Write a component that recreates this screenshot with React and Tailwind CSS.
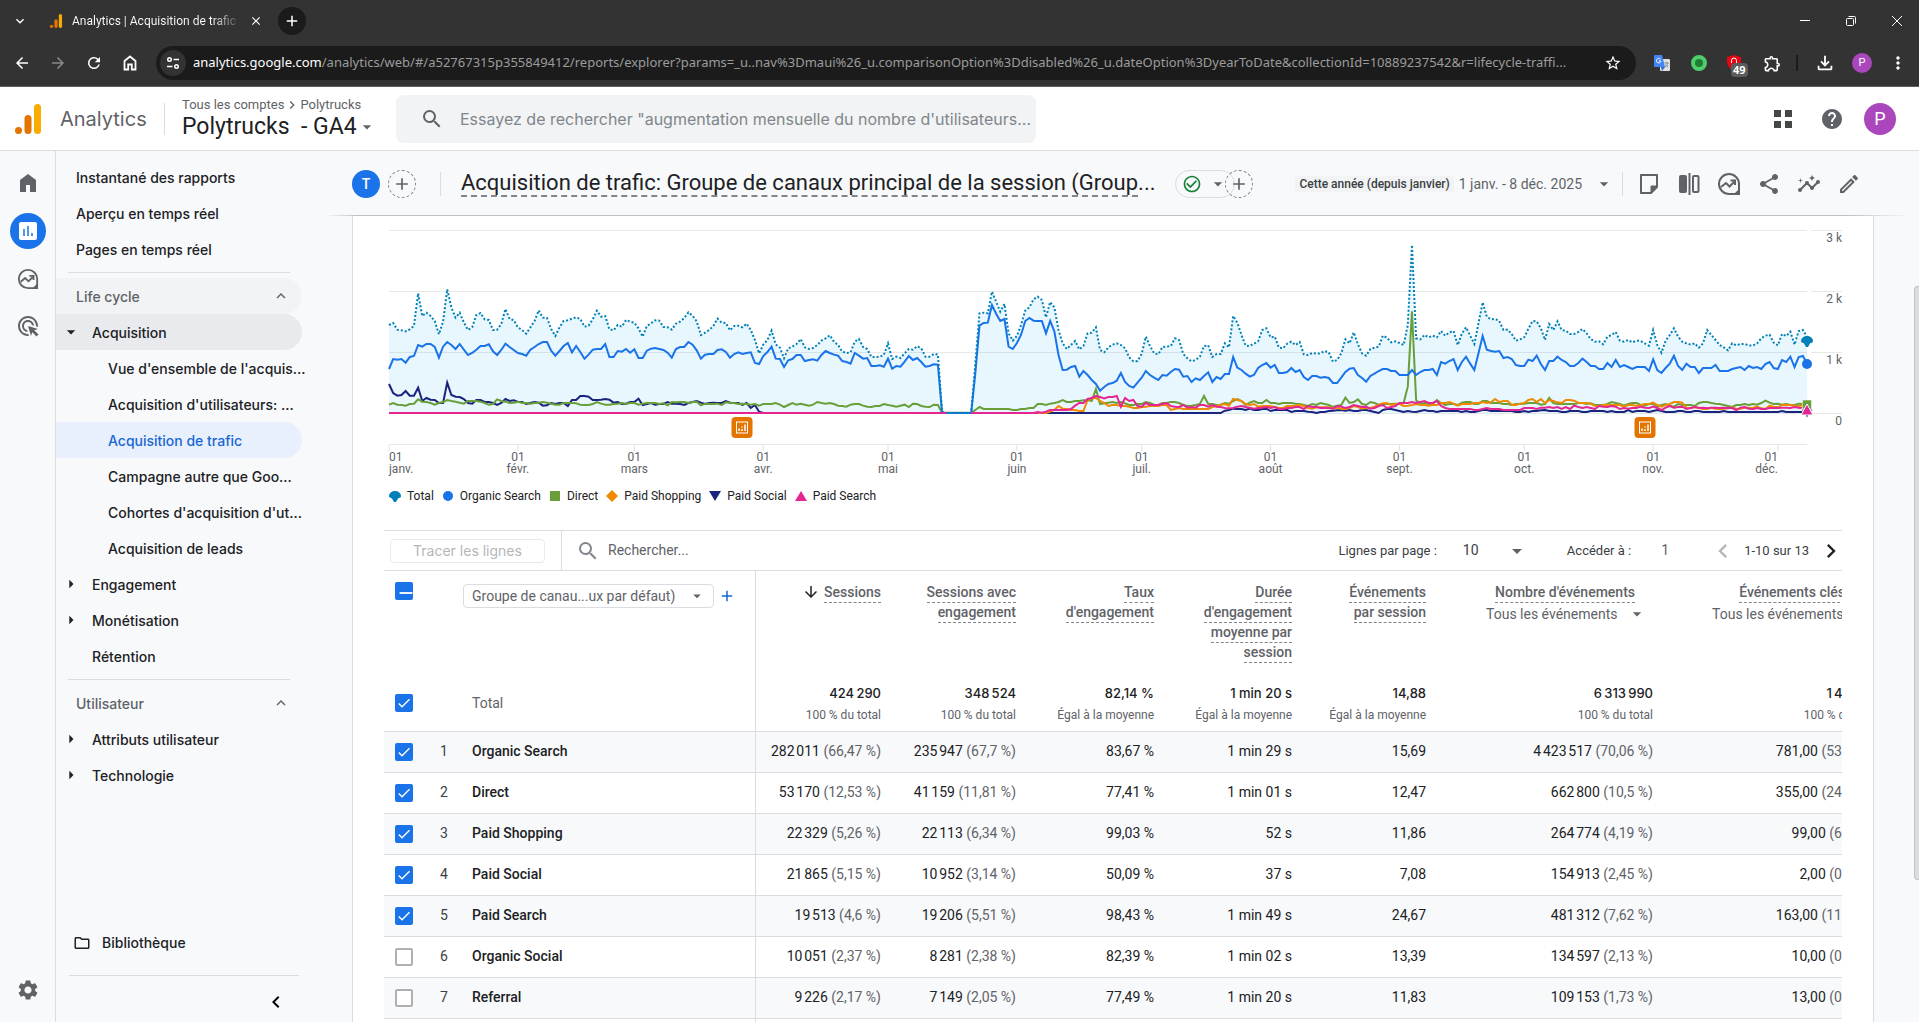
import React, { useState } from "react";
import {
  MdAdd,
  MdAdsClick,
  MdArrowBack,
  MdArrowDownward,
  MdArrowDropDown,
  MdArrowForward,
  MdArrowRight,
  MdCheck,
  MdCheckCircleOutline,
  MdChevronLeft,
  MdChevronRight,
  MdClose,
  MdExpandLess,
  MdExpandMore,
  MdHelp,
  MdInsights,
  MdMoreVert,
  MdOutlineEdit,
  MdOutlineExtension,
  MdOutlineFileDownload,
  MdOutlineFolder,
  MdRefresh,
  MdRemove,
  MdSearch,
  MdSettings,
  MdShare,
  MdStarBorder,
} from "react-icons/md";

const NB = "\u202f";
const flat = (y, n) => Array(n).fill(y);

// One point per day from 1 Jan to 8 Dec, y counted down from the top of the plot
// (31 = 3 k, 214 = 2 k, 397 = 1 k, 580 = 0).
const DAYS = 341;

const total = [
  315, 309, 329, 331, 334, 328, 318, 220, 288, 278, 288, 303, 343, 305, 208, 262, 293, 278, 307, 330,
  322, 285, 279, 298, 300, 330, 329, 312, 267, 297, 300, 322, 330, 341, 322, 303, 271, 293, 294, 327,
  348, 322, 303, 301, 296, 292, 297, 320, 317, 298, 272, 290, 288, 328, 331, 315, 320, 300, 305, 308,
  325, 350, 318, 310, 301, 302, 321, 322, 329, 311, 305, 294, 277, 287, 304, 345, 338, 330, 318, 296,
  308, 309, 331, 318, 317, 322, 311, 330, 360, 400, 374, 360, 332, 373, 383, 415, 385, 380, 372, 357,
  382, 387, 384, 375, 362, 355, 346, 365, 375, 395, 399, 397, 365, 357, 381, 387, 411, 411, 410, 405,
  370, 417, 410, 414, 400, 387, 389, 379, 385, 410, 410, 402, 403, 575, ...flat(579, 7), 430, 280, 278,
  280, 215, 245, 275, 252, 340, 362, 348, 315, 272, 262, 238, 230, 240, 292, 246, 262, 330, 370, 387,
  375, 363, 388, 378, 340, 338, 322, 390, 397, 382, 374, 370, 375, 385, 412, 424, 423, 402, 350, 378,
  400, 403, 381, 380, 378, 355, 360, 402, 415, 424, 420, 410, 378, 376, 411, 402, 402, 370, 382, 288,
  308, 345, 377, 378, 371, 364, 330, 325, 352, 350, 383, 385, 371, 365, 375, 366, 403, 405, 399, 401,
  400, 393, 397, 425, 420, 400, 358, 370, 337, 373, 400, 407, 387, 383, 380, 347, 353, 367, 364, 369,
  375, 315, 75, 355, 358, 345, 352, 347, 352, 333, 347, 337, 333, 375, 341, 322, 347, 372, 310, 247,
  290, 298, 297, 303, 330, 329, 342, 362, 358, 352, 326, 303, 304, 325, 360, 312, 330, 304, 330, 332,
  342, 342, 336, 327, 340, 357, 365, 364, 373, 350, 345, 336, 362, 365, 360, 367, 362, 363, 370, 377,
  330, 375, 398, 362, 345, 325, 350, 365, 370, 374, 370, 383, 370, 330, 345, 360, 375, 382, 391, 370,
  376, 372, 372, 376, 377, 370, 355, 347, 344, 368, 376, 342, 348, 335, 374, 333, 330, 350,
];

const organic = [
  447, 417, 419, 417, 428, 411, 408, 375, 380, 372, 372, 381, 413, 380, 366, 375, 387, 372, 389, 405,
  399, 389, 378, 378, 373, 394, 405, 390, 371, 381, 390, 399, 402, 407, 389, 381, 372, 366, 366, 392,
  407, 393, 378, 369, 397, 378, 396, 416, 404, 389, 387, 387, 372, 411, 411, 393, 395, 387, 398, 388,
  414, 414, 392, 386, 384, 387, 390, 398, 413, 387, 381, 381, 366, 374, 391, 416, 404, 402, 402, 390,
  388, 396, 413, 402, 397, 402, 399, 397, 429, 432, 408, 396, 380, 416, 417, 441, 421, 417, 405, 405,
  423, 420, 418, 422, 405, 393, 399, 404, 407, 423, 426, 431, 399, 407, 416, 414, 438, 438, 436, 440,
  416, 446, 438, 440, 425, 408, 420, 414, 426, 440, 438, 433, 434, 578, ...flat(579, 7), 460, 317, 309,
  308, 255, 281, 303, 297, 380, 387, 369, 344, 303, 294, 302, 303, 303, 340, 303, 334, 405, 450, 449,
  441, 438, 470, 453, 465, 480, 492, 512, 501, 492, 489, 482, 459, 486, 498, 503, 488, 473, 453, 465,
  473, 480, 465, 467, 456, 447, 449, 470, 468, 486, 475, 480, 468, 457, 486, 471, 477, 462, 462, 411,
  443, 450, 461, 470, 465, 444, 435, 429, 443, 435, 459, 459, 456, 444, 456, 450, 471, 480, 468, 468,
  473, 471, 474, 489, 489, 473, 456, 446, 444, 465, 474, 485, 468, 461, 453, 447, 447, 453, 453, 465,
  465, 465, 450, 465, 456, 450, 450, 447, 465, 426, 431, 423, 417, 450, 426, 410, 431, 450, 400, 348,
  389, 393, 395, 393, 414, 411, 417, 435, 438, 438, 419, 423, 407, 432, 450, 423, 423, 410, 420, 426,
  438, 438, 429, 416, 426, 438, 438, 447, 447, 429, 441, 420, 441, 435, 441, 447, 441, 441, 441, 453,
  418, 450, 459, 444, 431, 407, 438, 450, 431, 441, 441, 459, 444, 444, 444, 435, 453, 453, 453, 447,
  444, 441, 450, 438, 444, 441, 447, 432, 426, 444, 447, 420, 426, 410, 441, 411, 408, 430,
];

const direct = [
  554, 549, 554, 555, 557, 552, 551, 538, 545, 546, 549, 554, 549, 546, 540, 543, 545, 548, 551, 543,
  543, 543, 545, 549, 554, 552, 538, 543, 545, 549, 548, 545, 549, 549, 551, 549, 548, 546, 548, 551,
  554, 554, 549, 549, 549, 550, 554, 555, 555, 552, 546, 551, 554, 554, 552, 551, 549, 551, 549, 549,
  554, 551, 549, 549, 549, 552, 550, 556, 546, 547, 546, 546, 549, 546, 545, 556, 551, 552, 552, 551,
  555, 547, 548, 549, 552, 551, 552, 554, 552, 557, 552, 552, 552, 549, 554, 561, 555, 549, 554, 551,
  554, 557, 554, 546, 549, 551, 549, 552, 557, 558, 560, 554, 552, 552, 557, 560, 561, 558, 558, 552,
  555, 557, 560, 557, 554, 561, 551, 552, 558, 560, 561, 554, 555, 578, ...flat(578, 7), 570, 561, 567,
  ...flat(567, 6), 570, 570, 567, 567, 564, 564, 552, 552, 555, 551, 549, 546, 540, 546,
  546, 543, 543, 541, 541, 543, 507, 552, 550, 548, 546, 549, 546, 550, 555, 555, 552, 552, 546, 549,
  554, 555, 549, 549, 546, 546, 549, 555, 558, 557, 555, 552, 528, 552, 552, 555, 554, 549, 551, 543,
  537, 543, 555, 548, 543, 549, 549, 540, 549, 549, 552, 549, 549, 549, 551, 552, 555, 558, 552, 555,
  549, 552, 555, 561, 557, 555, 533, 549, 546, 538, 552, 555, 546, 549, 554, 552, 552, 552, 551, 551,
  549, 500, 274, 540, 552, 549, 552, 551, 540, 549, 555, 552, 552, 555, 548, 546, 546, 552, 552, 543,
  543, 549, 549, 549, 552, 552, 555, 552, 552, 551, 549, 549, 549, 554, 552, 534, 549, 552, 552, 552,
  552, 552, 549, 549, 552, 550, 555, 555, 555, 552, 546, 549, 552, 557, 552, 549, 549, 555, 557, 552,
  552, 560, 555, 552, 557, 560, 552, 555, 555, 555, 558, 549, 546, 546, 549, 551, 552, 555, 558, 561,
  555, 555, 552, 555, 552, 554, 549, 542, 548, 552, 551, 554, 552, 555, 555, 551, 552, 552,
];

const shopping = [
  ...flat(579, 159), 575, 570, 558, 566, 567, 570, 570, 573, 573, 540, 534, 534, 543, 549, 558, 555, 555,
  558, 558, 560, 564, 564, 561, 560, 558, 558, 558, 555, 555, 570, 567, 564, 567, 567, 567, 567, 567,
  567, 567, 561, 558, 554, 552, 557, 537, 540, 543, 552, 555, 552, 560, 558, 558, 558, 561, 564, 564,
  558, 558, 557, 554, 558, 564, 566, 562, 562, 562, 562, 566, 563, 567, 567, 564, 558, 561, 566, 564,
  564, 560, 555, 550, 549, 555, 552, 552, 558, 557, 555, 552, 555, 555, 557, 555, 555, 549, 549, 546,
  551, 557, 552, 552, 552, 549, 549, 546, 549, 547, 537, 546, 543, 543, 554, 555, 551, 549, 540, 537,
  546, 537, 549, 540, 543, 547, 549, 540, 540, 542, 548, 549, 549, 551, 558, 558, 555, 555, 555, 555,
  555, 560, 555, 555, 558, 555, 552, 552, 548, 555, 560, 555, 552, 546, 546, 548, 563, 564, 561, 563,
  567, 567, 563, 566, 567, 566, 565, 562, 567, 566, 563, 563, 564, 560, 565, 567, 557, 560, 562, 555,
  555, 555, 557, 558, 556, 557,
];

const social = [
  492, 519, 527, 525, 513, 527, 527, 503, 543, 534, 539, 540, 549, 549, 488, 525, 530, 531, 537, 549,
  551, 540, 540, 546, 546, 549, 555, 549, 537, 543, 541, 546, 546, 552, 549, 546, 548, 557, 556, 549,
  552, 549, 549, 558, 540, 540, 528, 528, 530, 540, 540, 539, 537, 539, 548, 546, 552, 551, 546, 546,
  536, 555, 552, 549, 554, 552, 552, 546, 551, 551, 552, 555, 549, 546, 543, 548, 552, 549, 548, 549,
  549, 543, 548, 549, 549, 555, 549, 564, 555, 575, ...flat(579, 111), 572, 570, 566, 567, 567, 570,
  566, 570, 570, 567, 566, 573, 570, 570, 570, 570, 576, 573, 573, 573, 575, 576, 579, 576, 576, 573,
  572, 571, 570, 572, 570, 573, 573, 570, 570, 573, 576, 579, 570, 567, 567, 570, 573, 576, 573, 575,
  576, 573, 570, 573, 573, 576, ...flat(573, 5), 576, 573, 576, 576, 573, 570, 570, 573, 573, 573, 573,
  573, 573, 576, 576, 573, 576, 573, 573, 571, 570, 573, 573, 573, 576, 576, 573, 573, 573, 576, 576,
  573, 573, 573, 573, 576, 573, 576, 576, 576, 570, 576, 573, 573, 573, 576, 573, 570, 573, 576, 576,
  576, 573, 573, 576, 576, 573, 573, 576, ...flat(576, 4), 573, ...flat(576, 13), 573, ...flat(576, 6), 573,
];

const search = [
  ...flat(579, 156), 576, 578, 575, 570, 570, 570, 570, 570, 567, 557, 549, 549, 537, 534, 528, 531, 535,
  531, 531, 528, 560, 534, 543, 540, 558, 560, 549, 555, 555, 555, 552, 549, 558, 560, 561, 555, 563,
  561, 563, 555, 555, 560, 555, 560, 561, 564, 565, 564, 560, 558, 561, 563, 566, 564, 563, 561, 564,
  561, 567, 567, 564, 564, 561, 561, 567, 558, 561, 561, 564, 563, 564, 566, 558, 560, 564, 561, 555,
  558, 561, 560, 566, 564, 558, 555, 564, 561, 558, 549, 549, 549, 546, 549, 546, 543, 549, 549, 543,
  558, 564, ...flat(567, 6), 570, 570, 567, 564, 567, 567, 567, ...flat(570, 5), 564, 564, 564, 567, 563,
  563, 561, 564, 561, 567, 561, 567, 557, 561, 564, 561, 564, 567, 558, 560, 561, 558, 560, 567, 564,
  566, 564, 564, 560, 563, 564, 560, 564, 570, 563, 558, 563, 561, 560, 567, 564, 561, 564, 563, 565,
  563, 563, 564, 563, 564, 564, 570, 563, 561, 566, 567, 564, 567, 567, 564, 564, 564, 563, 563, 564,
  561, 563, 565, 567,
];

const toPoints = (values) => values.map((y, x) => `${Math.min(x, DAYS)},${y}`).join(" ");

const lines = [
  { values: social, color: "#1a237e" },
  { values: direct, color: "#689f38" },
  { values: shopping, color: "#ef8a00" },
  { values: search, color: "#e52592" },
  { values: organic, color: "#1a73e8" },
];

const months = [
  ["janv.", 0],
  ["févr.", 31],
  ["mars", 59],
  ["avr.", 90],
  ["mai", 120],
  ["juin", 151],
  ["juil.", 181],
  ["août", 212],
  ["sept.", 243],
  ["oct.", 273],
  ["nov.", 304],
  ["déc.", 334],
];

const legend = [
  ["Total", <path d="M0 6a6 5 0 0 1 12 0c0 2-2 1.500-3 2.500L7 12H5L3 8.500C2 7.500 0 8 0 6z" fill="#0080b7" />],
  ["Organic Search", <circle cx="6" cy="6" r="5" fill="#1a73e8" />],
  ["Direct", <rect x="1" y="1" width="10" height="10" fill="#689f38" />],
  ["Paid Shopping", <path d="M6 0l6 6-6 6-6-6z" fill="#ef8a00" />],
  ["Paid Social", <path d="M0 1h12L6 11z" fill="#1a237e" />],
  ["Paid Search", <path d="M0 11h12L6 1z" fill="#e52592" />],
];

const rows = [
  ["Organic Search", true, ["282 011", "66,47 %"], ["235 947", "67,7 %"], ["83,67 %"], ["1 min 29 s"], ["15,69"], ["4 423 517", "70,06 %"], ["781,00", "53,79 %"]],
  ["Direct", true, ["53 170", "12,53 %"], ["41 159", "11,81 %"], ["77,41 %"], ["1 min 01 s"], ["12,47"], ["662 800", "10,5 %"], ["355,00", "24,45 %"]],
  ["Paid Shopping", true, ["22 329", "5,26 %"], ["22 113", "6,34 %"], ["99,03 %"], ["52 s"], ["11,86"], ["264 774", "4,19 %"], ["99,00", "6,82 %"]],
  ["Paid Social", true, ["21 865", "5,15 %"], ["10 952", "3,14 %"], ["50,09 %"], ["37 s"], ["7,08"], ["154 913", "2,45 %"], ["2,00", "0,14 %"]],
  ["Paid Search", true, ["19 513", "4,6 %"], ["19 206", "5,51 %"], ["98,43 %"], ["1 min 49 s"], ["24,67"], ["481 312", "7,62 %"], ["163,00", "11,23 %"]],
  ["Organic Social", false, ["10 051", "2,37 %"], ["8 281", "2,38 %"], ["82,39 %"], ["1 min 02 s"], ["13,39"], ["134 597", "2,13 %"], ["10,00", "0,69 %"]],
  ["Referral", false, ["9 226", "2,17 %"], ["7 149", "2,05 %"], ["77,49 %"], ["1 min 20 s"], ["11,83"], ["109 153", "1,73 %"], ["13,00", "0,90 %"]],
];

const totals = [
  ["424 290", "100 % du total"],
  ["348 524", "100 % du total"],
  ["82,14 %", "Égal à la moyenne"],
  ["1 min 20 s", "Égal à la moyenne"],
  ["14,88", "Égal à la moyenne"],
  ["6 313 990", "100 % du total"],
  ["1 452,00", "100 % du total"],
];

// Digits are grouped with a narrow space, units keep the normal one.
const group = (text) => text.replace(/(\d) (?=\d{3})/g, `$1${NB}`);

const AnalyticsLogo = ({ className }) => (
  <svg viewBox="0 0 26 30" className={className} aria-hidden="true">
    <rect x="19" y="0" width="7" height="30" rx="3.500" fill="#f9ab00" />
    <rect x="9.500" y="11" width="7" height="19" rx="3.500" fill="#e37400" />
    <circle cx="3.500" cy="26.500" r="3.500" fill="#e37400" />
  </svg>
);

const ExploreIcon = ({ className }) => (
  <svg viewBox="0 0 24 24" className={className} fill="none" stroke="currentColor" strokeWidth="2" aria-hidden="true">
    <path d="M12 22a10 10 0 1 1 10-10v10H12z" />
    <path d="M4 15l5-4 3.500 3.500L18 9" />
    <path d="M13.500 8.500H18V13" />
    <path d="M22 17v5h-5z" fill="currentColor" stroke="none" />
  </svg>
);

const AnnotationIcon = () => (
  <svg viewBox="0 0 21 21" className="size-[21px]" fill="none" stroke="#fff" aria-hidden="true">
    <rect x="5" y="5" width="11" height="11" />
    <path d="M7.500 14v-2.500M10.500 14v-2M10.500 10.500V9.500M13.500 14V7.500" strokeWidth="1.500" />
  </svg>
);

const iconButton = "flex shrink-0 items-center justify-center";

const BrowserChrome = () => (
  <div className="shrink-0 border-b border-[#5f5f5f] bg-[#333333] text-white">
    <div className="flex h-[41px] items-center">
      <button aria-label="Rechercher dans les onglets" className={`${iconButton} ml-3 size-4`}>
        <MdExpandMore size={16} />
      </button>
      <div className="ml-[21px] flex items-center">
        <AnalyticsLogo className="size-[14px]" />
        <span className="ml-[9px] w-[164px] whitespace-nowrap bg-gradient-to-r from-white from-85% to-white/20 bg-clip-text text-[12px] text-transparent">
          Analytics | Acquisition de trafic:
        </span>
        <button aria-label="Fermer l'onglet" className={`${iconButton} ml-3 size-4`}>
          <MdClose size={14} />
        </button>
      </div>
      <button aria-label="Nouvel onglet" className={`${iconButton} ml-[14px] size-7 rounded-full bg-[#1b1b1b]`}>
        <MdAdd size={18} />
      </button>
      <div className="ml-auto flex items-center gap-8 pr-[15px]">
        <button aria-label="Réduire" className={`${iconButton} size-[14px]`}>
          <span className="h-px w-[10px] bg-white" />
        </button>
        <button aria-label="Restaurer" className={`${iconButton} size-[14px]`}>
          <svg viewBox="0 0 12 12" className="size-3" fill="none" stroke="currentColor">
            <rect x="1.500" y="3.500" width="7" height="7" rx="1" />
            <path d="M3.500 1.500h6a1 1 0 0 1 1 1v6" />
          </svg>
        </button>
        <button aria-label="Fermer" className={`${iconButton} size-[14px]`}>
          <svg viewBox="0 0 12 12" className="size-3" stroke="currentColor">
            <path d="M1 1l10 10M11 1L1 11" />
          </svg>
        </button>
      </div>
    </div>
    <div className="flex h-[45px] items-start pt-[5px]">
      <div className="flex h-[34px] items-center gap-[18px] pl-[13px]">
        <button aria-label="Retour" className={iconButton}><MdArrowBack size={18} /></button>
        <button aria-label="Avancer" className={`${iconButton} text-[#8a8a8a]`}><MdArrowForward size={18} /></button>
        <button aria-label="Actualiser" className={iconButton}><MdRefresh size={18} /></button>
        <button aria-label="Accueil" className={iconButton}>
          <svg viewBox="0 0 18 18" className="size-[18px]" fill="none" stroke="currentColor" strokeWidth="1.800">
            <path d="M3.500 7L9 2.500 14.500 7v8.500h-3.700v-5H7.200v5H3.500z" />
          </svg>
        </button>
      </div>
      <div className="ml-[17px] flex h-[34px] min-w-0 flex-1 items-center rounded-full bg-[#1b1b1b] pl-1">
        <button aria-label="Informations sur le site" className={`${iconButton} size-[26px] rounded-full bg-[#333333]`}>
          <svg viewBox="0 0 14 14" className="size-[14px]" fill="none" stroke="currentColor" strokeWidth="1.500">
            <circle cx="3.500" cy="3.500" r="1.750" />
            <path d="M7.500 3.500H13M1 10.500h5.500" />
            <circle cx="10.500" cy="10.500" r="1.750" />
          </svg>
        </button>
        <div className="ml-[7px] min-w-0 flex-1 overflow-hidden whitespace-nowrap font-['Noto_Sans',sans-serif] text-[13px] text-[#9b9b9b]">
          <span className="text-white">analytics.google.com</span>
          /analytics/web/#/a52767315p355849412/reports/explorer?params=_u..nav%3Dmaui%26_u.comparisonOption%3Ddisabled%26_u.dateOption%3DyearToDate&amp;collectionId=10889237542&amp;r=lifecycle-traffi...
        </div>
        <button aria-label="Ajouter aux favoris" className={`${iconButton} ml-3 mr-[14px]`}><MdStarBorder size={18} /></button>
      </div>
      <div className="flex h-[34px] items-center pl-[18px] pr-[11px]">
        <button aria-label="Google Traduction" className={iconButton}>
          <svg viewBox="0 0 16 16" className="size-4">
            <rect x="6" y="4" width="10" height="12" rx="1" fill="#e0e0e0" />
            <path d="M1 0h7l3 12H1a1 1 0 0 1-1-1V1a1 1 0 0 1 1-1z" fill="#4285f4" />
            <path d="M11 12l-3 4-1-4z" fill="#3367d6" />
            <path d="M7 6H4.800M6.500 4.200A2.300 2.300 0 1 0 7 6" fill="none" stroke="#fff" />
            <path d="M10.500 8h4M12.500 7v1M14 8c-.5 2-1.500 3-3 4M11.500 9.500c.5 1 1.500 2 2.500 2.500" fill="none" stroke="#607d8b" strokeWidth=".8" />
          </svg>
        </button>
        <button aria-label="Extension active" className={`${iconButton} ml-[21px] size-4 rounded-full border-4 border-[#4fce6b] bg-[#1e7d32]`} />
        <button aria-label="Bloqueur, 49 éléments" className={`${iconButton} relative ml-[19px] size-4`}>
          <svg viewBox="0 0 16 16" className="size-4">
            <path d="M8 0l7 2v5c0 4-3 7-7 9-4-2-7-5-7-9V2z" fill="#e30613" />
            <path d="M5.500 8V5.500a2.500 2.500 0 0 1 5 0V8" fill="none" stroke="#fff" />
          </svg>
          <span className="absolute left-[5px] top-2 rounded-sm bg-[#5c5c5c] px-[2px] font-['Open_Sans',sans-serif] text-[11px] font-bold leading-[14px]">49</span>
        </button>
        <button aria-label="Extensions" className={`${iconButton} ml-[21px]`}><MdOutlineExtension size={19} /></button>
        <span className="ml-[14px] h-4 w-[2px] bg-[#1b1b1b]" />
        <button aria-label="Téléchargements" className={`${iconButton} ml-4`}><MdOutlineFileDownload size={22} /></button>
        <button aria-label="Profil" className={`${iconButton} ml-4 size-5 rounded-full bg-[#ab47bc] text-[11px]`}>P</button>
        <button aria-label="Menu" className={`${iconButton} ml-4`}><MdMoreVert size={20} /></button>
      </div>
    </div>
  </div>
);

const Header = () => (
  <header className="flex h-16 shrink-0 items-center border-b border-[#dadce0] bg-white text-[#5f6368]">
    <AnalyticsLogo className="ml-[15px] h-[30px] w-[26px]" />
    <span className="ml-[19px] w-[104px] font-['Inter',sans-serif] text-[20px]">Analytics</span>
    <div className="h-8 w-[213px] border-l border-[#dadce0] pl-[17px]">
      <div className="-mt-2 flex items-center text-[13px] leading-5">
        <a href="#comptes">Tous les comptes</a>
        <MdChevronRight size={16} />
        <a href="#polytrucks">Polytrucks</a>
      </div>
      <button className="flex items-center whitespace-nowrap text-[23px] leading-6 text-[#202124]">
        Polytrucks&nbsp; - GA4
        <MdArrowDropDown size={20} className="text-[#5f6368]" />
      </button>
    </div>
    <label className="ml-[19px] flex h-12 w-[640px] items-center rounded-lg bg-[#f1f3f4] pl-6">
      <MdSearch size={24} />
      <input
        type="text"
        aria-label="Rechercher"
        placeholder={'Essayez de rechercher "augmentation mensuelle du nombre d\'utilisateurs...'}
        className="ml-4 min-w-0 flex-1 bg-transparent font-['Inter',sans-serif] text-[16px] outline-none placeholder:text-[#80868b]"
      />
    </label>
    <div className="ml-auto flex items-center gap-7 pr-[23px]">
      <button aria-label="Applications" className="grid size-[18px] grid-cols-2 gap-1 text-[#444746]">
        <span className="bg-current" />
        <span className="bg-current" />
        <span className="bg-current" />
        <span className="bg-current" />
      </button>
      <button aria-label="Aide" className={iconButton}><MdHelp size={24} /></button>
      <button aria-label="Compte" className={`${iconButton} -ml-2 size-8 rounded-full bg-[#ab47bc] text-[18px] text-white`}>P</button>
    </div>
  </header>
);

const Rail = () => (
  <nav className="flex w-14 shrink-0 flex-col items-center border-r border-[#dadce0] pb-5 pt-5 text-[#5f6368]">
    <a href="#accueil" aria-label="Accueil">
      <svg viewBox="0 0 24 24" className="size-6" fill="currentColor"><path d="M4 21V9l8-6 8 6v12h-6v-7h-4v7z" /></svg>
    </a>
    <a href="#rapports" aria-label="Rapports" className="mt-[18px] flex size-9 items-center justify-center rounded-full bg-[#1a73e8]">
      <svg viewBox="0 0 18 18" className="size-[18px]">
        <rect width="18" height="18" rx="2" fill="#fff" />
        <path d="M5 14V7M9 14V4M13 14v-3" stroke="#1a73e8" strokeWidth="1.500" />
      </svg>
    </a>
    <a href="#explorer" aria-label="Explorer" className="mt-[19px]"><ExploreIcon className="size-[22px]" /></a>
    <a href="#publicite" aria-label="Publicité" className="mt-6"><MdAdsClick size={24} /></a>
    <a href="#admin" aria-label="Administration" className="mt-auto"><MdSettings size={24} /></a>
  </nav>
);

const NavLink = ({ children, level = 0, arrow, tone = "text-[#202124]" }) => (
  <a
    href="#rapport"
    className={`flex h-9 w-[246px] shrink-0 items-center whitespace-nowrap rounded-r-full ${level === 2 ? "pl-[52px]" : level === 1 ? "pl-[5px]" : "pl-5"} ${tone}`}
  >
    {level === 1 && (
      <span className="flex w-[31px] items-center">
        {arrow === "down" && <MdArrowDropDown size={20} />}
        {arrow === "right" && <MdArrowRight size={20} />}
      </span>
    )}
    {children}
  </a>
);

const Section = ({ children, tone = "" }) => (
  <button className={`flex h-9 w-[246px] shrink-0 items-center justify-between rounded-r-full pl-5 pr-3 text-[#5f6368] ${tone}`}>
    {children}
    <MdExpandLess size={18} />
  </button>
);

const Sidebar = () => (
  <nav className="flex w-[269px] shrink-0 flex-col pt-2 font-['Inter',sans-serif] text-[14px] font-medium">
    <NavLink>Instantané des rapports</NavLink>
    <NavLink>Aperçu en temps réel</NavLink>
    <NavLink>Pages en temps réel</NavLink>
    <hr className="my-[5px] ml-3 w-[222px] border-[#dadce0]" />
    <Section tone="bg-[#f1f3f4]">Life cycle</Section>
    <NavLink level={1} arrow="down" tone="bg-[#e8eaed] text-[#202124]">Acquisition</NavLink>
    <NavLink level={2}>Vue d'ensemble de l'acquis...</NavLink>
    <NavLink level={2}>Acquisition d'utilisateurs: ...</NavLink>
    <NavLink level={2} tone="bg-[#e8f0fe] text-[#1967d2]">Acquisition de trafic</NavLink>
    <NavLink level={2}>Campagne autre que Goo...</NavLink>
    <NavLink level={2}>Cohortes d'acquisition d'ut...</NavLink>
    <NavLink level={2}>Acquisition de leads</NavLink>
    <NavLink level={1} arrow="right">Engagement</NavLink>
    <NavLink level={1} arrow="right">Monétisation</NavLink>
    <NavLink level={1}>Rétention</NavLink>
    <hr className="my-[5px] ml-3 w-[222px] border-[#dadce0]" />
    <Section>Utilisateur</Section>
    <NavLink level={1} arrow="right">Attributs utilisateur</NavLink>
    <NavLink level={1} arrow="right">Technologie</NavLink>
    <div className="mt-auto w-[243px] pl-[13px]">
      <a href="#bibliotheque" className="flex h-[66px] items-center gap-[11px] border-b border-[#dadce0] pl-1 text-[#202124]">
        <MdOutlineFolder size={18} />
        Bibliothèque
      </a>
      <button aria-label="Réduire le menu" className={`${iconButton} ml-auto mr-[11px] h-[46px] pt-[6px] text-black`}>
        <MdChevronLeft size={24} />
      </button>
    </div>
  </nav>
);

const ReportBar = () => (
  <div className="shrink-0">
    <div className="flex h-16 items-center pl-[27px] pr-[58px] pt-[2px] text-[#5f6368]">
      <button className={`${iconButton} size-7 rounded-full bg-[#1a73e8] text-[14px] font-medium text-white`}>T</button>
      <button aria-label="Ajouter une comparaison" className={`${iconButton} ml-2 size-7 rounded-full border border-dashed border-[#80868b]`}>
        <MdAdd size={20} />
      </button>
      <span className="ml-6 h-6 w-px bg-[#dadce0]" />
      <h1 className="ml-5 whitespace-nowrap pb-[2px] text-[22px] leading-7 text-[#202124]">
        <span className="border-b-2 border-dashed border-[#80868b]">
          Acquisition de trafic: Groupe de canaux principal de la session (Group
        </span>
        ...
      </h1>
      <button aria-label="État du rapport" className="ml-[19px] flex h-7 w-[60px] shrink-0 items-center justify-between rounded-full border border-[#dadce0] pl-[6px] pr-[6px]">
        <MdCheckCircleOutline size={20} className="text-[#188038]" />
        <MdArrowDropDown size={20} />
      </button>
      <button aria-label="Ajouter un filtre" className={`${iconButton} -ml-[10px] size-7 rounded-full border border-dashed border-[#80868b]`}>
        <MdAdd size={20} />
      </button>
      <button className="ml-auto flex shrink-0 items-center whitespace-nowrap text-[14px]">
        <span className="bg-[#f1f3f4] px-1 text-[12px] font-medium leading-4 text-[#3c4043]">Cette année (depuis janvier)</span>
        <span className="ml-[5px]">1 janv. - 8 déc. 2025</span>
        <MdArrowDropDown size={20} className="ml-3" />
      </button>
      <span className="ml-2 h-6 w-px bg-[#dadce0]" />
      <div className="flex items-center gap-4 pl-[14px]">
        <button aria-label="Annotations" className={iconButton}>
          <svg viewBox="0 0 24 24" className="size-6" fill="none" stroke="currentColor" strokeWidth="2">
            <path d="M4 3h16v12l-6 6H4z" strokeLinejoin="round" />
            <path d="M20 14h-6v7z" fill="currentColor" strokeWidth="1" />
          </svg>
        </button>
        <button aria-label="Comparer" className={iconButton}>
          <svg viewBox="0 0 24 24" className="size-6" fill="none" stroke="currentColor" strokeWidth="2">
            <rect x="2" y="3" width="8" height="18" rx="2" fill="currentColor" stroke="none" />
            <path d="M12.500 1v22" />
            <rect x="16" y="4" width="5.500" height="16" rx="1" />
          </svg>
        </button>
        <button aria-label="Explorer" className={iconButton}><ExploreIcon className="size-6" /></button>
        <button aria-label="Partager" className={iconButton}><MdShare size={24} /></button>
        <button aria-label="Insights" className={iconButton}><MdInsights size={24} /></button>
        <button aria-label="Modifier" className={iconButton}><MdOutlineEdit size={24} /></button>
      </div>
    </div>
    <div className="mr-2 flex h-px">
      <span className="w-8 bg-gradient-to-r from-transparent to-[#bdc1c6]" />
      <span className="flex-1 bg-[#bdc1c6]" />
      <span className="w-16 bg-gradient-to-r from-[#bdc1c6] to-transparent" />
    </div>
  </div>
);

const Chart = () => (
  <div className="pl-9 pr-[35px] pt-1 text-[12px] text-[#5f6368]">
    <div className="flex">
      <div className="relative min-w-0 flex-1">
        <svg viewBox="0 0 341 675" preserveAspectRatio="none" className="block h-[225px] w-full overflow-visible" fill="none">
          {[31.5, 214.5, 397.5, 580.5, 673.5].map((y) => (
            <path key={y} d={`M0 ${y}H341`} stroke="#e8e8e8" vectorEffect="non-scaling-stroke" />
          ))}
          {months.map(([name, day]) => (
            <path key={name} d={`M${day} 675v18`} stroke="#e0e0e0" vectorEffect="non-scaling-stroke" />
          ))}
          <polygon points={`0,580 ${toPoints(total)} 341,580`} fill="#03a9f4" fillOpacity=".09" />
          {lines.map((line) => (
            <polyline key={line.color} points={toPoints(line.values)} stroke={line.color} strokeWidth="2" vectorEffect="non-scaling-stroke" />
          ))}
          <polyline points={toPoints(total)} stroke="#0080b7" strokeWidth="2" strokeDasharray="2 2" vectorEffect="non-scaling-stroke" />
          <path d="M0 579H134M140 579H156" stroke="#e52592" strokeWidth="2" vectorEffect="non-scaling-stroke" />
        </svg>
        {/* last value of every series */}
        <svg viewBox="0 0 14 84" className="absolute -right-[7px] top-[114px] h-[84px] w-[14px]" aria-hidden="true">
          <path d="M1 7a6 5 0 0 1 12 0c0 2-2 1.500-3 2.500L8 13H6L4 9.500C3 8.500 1 9 1 7z" fill="#0080b7" />
          <circle cx="7" cy="30" r="5" fill="#1a73e8" />
          <path d="M1 75h12l-6 9z" fill="#1a237e" stroke="#fff" />
          <rect x="2.500" y="66" width="9" height="9" fill="#689f38" stroke="#fff" strokeWidth=".5" />
          <path d="M7 70l6 11H1z" fill="#e52592" stroke="#fff" />
        </svg>
        {[24.9, 88.6].map((left) => (
          <button
            key={left}
            aria-label="Annotation"
            className="absolute top-[197px] -translate-x-1/2 rounded-[4px] bg-[#e37400]"
            style={{ left: `${left}%` }}
          >
            <AnnotationIcon />
          </button>
        ))}
        {months.map(([name, day]) => (
          <span
            key={name}
            className={`absolute top-[231px] text-center leading-3 ${day === 0 ? "text-left" : day === 334 ? "-translate-x-full text-right" : "-translate-x-1/2"}`}
            style={{ left: `${(day / DAYS) * 100}%` }}
          >
            01
            <br />
            {name}
          </span>
        ))}
      </div>
      <div className="-mr-1 w-[35px] pl-1 pt-[10px] text-right leading-[15px]">
        {["3 k", "2 k", "1 k", "0"].map((label) => (
          <div key={label} className="h-[61px] border-t border-[#e8e8e8]">{label}</div>
        ))}
      </div>
    </div>
    <ul className="flex items-center gap-2 pb-6 pt-3 leading-5 text-[#202124]">
      {legend.map(([name, shape]) => (
        <li key={name} className="flex items-center gap-[6px]">
          <svg viewBox="0 0 12 12" className="size-3" aria-hidden="true">{shape}</svg>
          {name}
        </li>
      ))}
    </ul>
  </div>
);

const Checkbox = ({ label, checked, onChange, mixed }) => (
  <span className="ml-[11px] grid size-[18px]">
    <input
      type="checkbox"
      aria-label={label}
      checked={checked}
      onChange={onChange}
      className="col-start-1 row-start-1 size-[18px] appearance-none rounded-[2px] border-2 border-[#b0b0b0] bg-white checked:border-[#1a73e8] checked:bg-[#1a73e8]"
    />
    {checked && (
      <span className="pointer-events-none z-10 col-start-1 row-start-1 flex items-center justify-center text-white">
        {mixed ? <MdRemove size={22} className="shrink-0" /> : <MdCheck size={16} />}
      </span>
    )}
  </span>
);

const Metric = ({ children }) => (
  <span className="border-b border-dashed border-[#80868b] pb-[2px] font-medium leading-5">{children}</span>
);

const EventSelect = () => (
  <span className="mt-[1px] flex items-center justify-end font-normal leading-[22px]">
    <select aria-label="Événements" className="appearance-none bg-transparent">
      <option>Tous les événements</option>
    </select>
    <MdArrowDropDown size={20} className="ml-[9px]" />
  </span>
);

const DataTable = () => {
  const [checked, setChecked] = useState(rows.map((row) => row[1]));
  const toggle = (i) => setChecked(checked.map((value, j) => (i === j ? !value : value)));

  return (
    <div className="ml-[31px] mr-[31px] border-t border-[#dadce0] text-[14px] text-[#5f6368]">
      <div className="flex h-10 items-center border-b border-[#dadce0] text-[13px] text-[#3c4043]">
        <button className="ml-[6px] h-6 w-[155px] rounded border border-[#e8eaed] font-['Inter',sans-serif] text-[14px] text-[#b4b7ba]" disabled>
          Tracer les lignes
        </button>
        <span className="ml-4 h-full w-px bg-[#dadce0]" />
        <label className="flex flex-1 items-center pl-[14px] text-[#80868b]">
          <MdSearch size={24} />
          <input type="text" aria-label="Rechercher dans le tableau" placeholder="Rechercher..." className="ml-2 text-[14px] outline-none placeholder:text-[#5f6368]" />
        </label>
        <label htmlFor="page-size">Lignes par page :</label>
        <span className="ml-[26px] flex items-center">
          <select id="page-size" className="w-11 appearance-none bg-transparent text-[14px]">
            <option>10</option>
          </select>
          <MdArrowDropDown size={24} className="-mx-[2px] text-[#5f6368]" />
        </span>
        <label htmlFor="go-to" className="ml-10">Accéder à :</label>
        <input id="go-to" type="text" defaultValue="1" className="ml-[18px] w-8 text-center text-[14px] text-[#5f6368] outline-none" />
        <button aria-label="Page précédente" className="ml-7 text-[#b4b7ba]"><MdChevronLeft size={28} /></button>
        <span className="ml-[7px]">1-10 sur 13</span>
        <button aria-label="Page suivante" className="-mr-[3px] ml-2 text-[#202124]"><MdChevronRight size={28} /></button>
      </div>
      <div className="overflow-hidden">
        <table className="w-[1511px] table-fixed border-collapse">
          <colgroup>
            <col className="w-11" />
            <col className="w-8" />
            <col className="w-[295px]" />
            <col className="w-[142px]" />
            <col className="w-[135px]" />
            <col className="w-[138px]" />
            <col className="w-[138px]" />
            <col className="w-[134px]" />
            <col className="w-[227px]" />
            <col className="w-[226px]" />
          </colgroup>
          <thead>
            <tr className="h-[105px] text-right align-top leading-5 [&>th]:pr-4 [&>th]:pt-[11px]">
              <th className="!pr-0">
                <Checkbox label="Tout sélectionner" checked mixed onChange={() => {}} />
              </th>
              <th colSpan="2" className="border-r border-[#dadce0] !pr-0 text-left font-normal">
                <span className="ml-[35px] mt-[2px] flex items-center">
                  <span className="flex h-6 w-[251px] items-center rounded border border-[#dadce0] pl-2">
                    <select aria-label="Dimension" className="flex-1 appearance-none bg-transparent leading-5">
                      <option>Groupe de canau...ux par défaut)</option>
                    </select>
                    <MdArrowDropDown size={18} className="mr-[7px]" />
                  </span>
                  <button aria-label="Ajouter une dimension" className="ml-1 text-[#1967d2]"><MdAdd size={18} /></button>
                </span>
              </th>
              <th>
                <span className="flex items-center justify-end gap-1">
                  <MdArrowDownward size={18} className="text-[#202124]" />
                  <span><Metric>Sessions</Metric></span>
                </span>
              </th>
              <th><Metric>Sessions avec engagement</Metric></th>
              <th><Metric>Taux<br />d'engagement</Metric></th>
              <th><Metric>Durée d'engagement moyenne par session</Metric></th>
              <th><Metric>Événements<br />par session</Metric></th>
              <th>
                <span className="block pr-[18px]"><Metric>Nombre d'événements</Metric></span>
                <span className="block pr-[6px]"><EventSelect /></span>
              </th>
              <th>
                <span className="block pr-[34px]"><Metric>Événements clés</Metric></span>
                <span className="block pr-[6px]"><EventSelect /></span>
              </th>
            </tr>
          </thead>
          <tbody className="[&>tr>td]:border-b [&>tr>td]:border-[#dadce0]">
            <tr className="h-[55px] text-right">
              <td><Checkbox label="Total" checked onChange={() => {}} /></td>
              <td />
              <td className="border-r pl-3 text-left">Total</td>
              {totals.map(([value, share], i) => (
                <td key={i} className="whitespace-nowrap pr-4 pt-[2px] leading-[22px]">
                  <div className="font-['Inter',sans-serif] text-[13px] font-medium text-[#202124]">{group(value)}</div>
                  <div className="text-[12px]">{share}</div>
                </td>
              ))}
            </tr>
            {rows.map(([name, , ...cells], i) => (
              <tr key={name} className="h-[41px] text-right odd:bg-white even:bg-[#f8f9fb]">
                <td><Checkbox label={name} checked={checked[i]} onChange={() => toggle(i)} /></td>
                <td className="text-center text-[#3c4043]">{i + 1}</td>
                <td className="border-r pl-3 text-left font-medium text-[#202124]">{name}</td>
                {cells.map(([value, share], j) => (
                  <td key={j} className="whitespace-nowrap pr-4">
                    <span className="text-[#202124]">{group(value)}</span>
                    {share && ` (${share})`}
                  </td>
                ))}
              </tr>
            ))}
            <tr className="h-[41px]">
              <td colSpan="3" className="border-r" />
              <td colSpan="7" />
            </tr>
          </tbody>
        </table>
      </div>
    </div>
  );
};

const App = () => {
  return (
    <div className="flex h-screen flex-col overflow-hidden bg-[#f8f9fb] font-['Roboto',sans-serif]">
      <BrowserChrome />
      <Header />
      <div className="flex min-h-0 flex-1">
        <Rail />
        <Sidebar />
        <main className="relative flex min-w-0 flex-1 flex-col">
          <ReportBar />
          <div className="ml-[27px] mr-[45px] min-h-0 flex-1 overflow-hidden border-x border-[#dadce0] bg-white">
            <Chart />
            <DataTable />
          </div>
          <span className="absolute right-0 top-[135px] h-[594px] w-[5px] rounded-l border-y border-l border-[#c4c4c8] bg-[#dadce0]" />
        </main>
      </div>
    </div>
  );
};

export default App;
